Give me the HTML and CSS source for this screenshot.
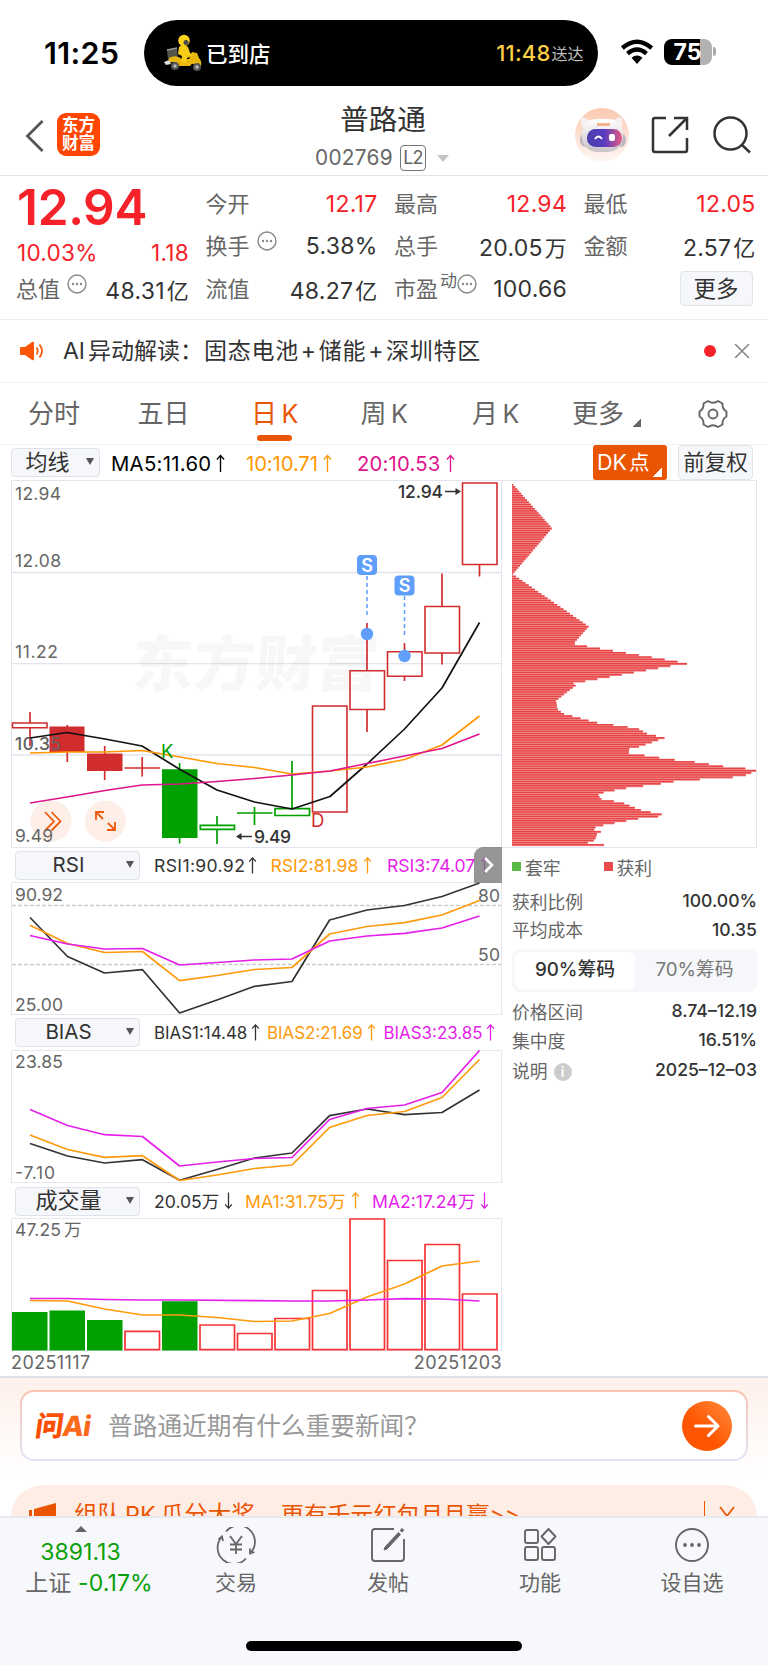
FILE: index.html
```html
<!DOCTYPE html>
<html lang="zh-CN">
<head>
<meta charset="utf-8">
<title>普路通 002769</title>
<link rel="stylesheet" href="styles.css">
</head>
<body>
<div class="phone">

<header class="status">
  <span class="clock">11:25</span>
  <div class="island">
    <svg class="scooter" width="40" height="38" viewBox="0 0 40 38">
      <path d="M3 16 L13 14 L14 26 L4 26Z" fill="#55554c"/><path d="M3 16L13 14" stroke="#999" stroke-width="1.5"/>
      <path d="M5 24 Q12 20 18 25 L25 25 L28 18 L33 19 L35 24 Q38 27 37 32 L33 33 Q29 27 26 32 L14 32 Q11 26 5 29Z" fill="#e9b60c"/>
      <path d="M15 13 Q19 9 24 13 L26 19 L30 21 L23 24 L22 29 L17 28 L18 22 L14 20Z" fill="#f7cc16"/>
      <circle cx="20" cy="6.500" r="5.800" fill="#ffd21c"/><circle cx="22" cy="8.500" r="2.500" fill="#484a50"/>
      <circle cx="11" cy="32" r="4" fill="#555"/><circle cx="11" cy="32" r="1.800" fill="#bbb"/>
      <circle cx="33" cy="33" r="4" fill="#555"/><circle cx="33" cy="33" r="1.800" fill="#bbb"/>
      <path d="M0 28L5 26L7 30L2 31Z" fill="#ddd"/>
    </svg>
    <span class="arrived">已到店</span>
    <span class="eta">11:48</span><span class="eta-label">送达</span>
  </div>
  <svg class="wifi" width="34" height="26" viewBox="0 0 34 26">
    <g fill="none" stroke="#000" stroke-width="4.300"><path d="M2.300 9 Q17 -3.500 31.700 9"/><path d="M7.500 14.600 Q17 6.500 26.500 14.600"/></g>
    <path d="M11.500 18.700 Q17 14.500 22.500 18.700 L17 25Z"/>
  </svg>
  <div class="battery"><span>75</span></div>
  <i class="battery-cap"></i>
</header>

<nav class="head">
  <svg class="back" width="20" height="34" viewBox="0 0 20 34"><path d="M17.500 2 L2.500 17 L17.500 32" fill="none" stroke="#555" stroke-width="2.800"/></svg>
  <div class="logo"><span>东方</span><span>财富</span></div>
  <div class="name">
    <h1>普路通</h1>
    <div class="code"><span>002769</span><b>L2</b><i></i></div>
  </div>
  <svg class="robot" width="54" height="54" viewBox="0 0 54 54">
    <defs>
      <linearGradient id="halo" x2="0" y2="1"><stop stop-color="#fbc9b1"/><stop offset="1" stop-color="#fff7f3"/></linearGradient>
      <linearGradient id="visor" x2="1"><stop stop-color="#493fae"/><stop offset=".5" stop-color="#5a3cc0"/><stop offset="1" stop-color="#e65b82"/></linearGradient>
      <linearGradient id="shell" x2="0" y2="1"><stop stop-color="#fff"/><stop offset="1" stop-color="#c9c3c8"/></linearGradient>
    </defs>
    <circle cx="27" cy="27" r="27" fill="url(#halo)"/>
    <path d="M8 20Q4 14 7 9Q12 10 17 15L37 14Q42 9 46 9Q49 14 46 21Z" fill="#f5f0f0"/>
    <rect x="5" y="25" width="46" height="14" rx="6" fill="#bcb8c2"/>
    <rect x="7" y="11" width="41" height="33" rx="15" fill="url(#shell)"/>
    <rect x="12" y="21" width="35" height="18" rx="8.500" fill="url(#visor)"/>
    <path d="M22 16.500H35" stroke="#f2a878" stroke-width="2.500"/>
    <path d="M20 31Q23.500 26 27 31" fill="none" stroke="#fff" stroke-width="2"/><rect x="34" y="26" width="6" height="7" rx="2" fill="#fff"/>
  </svg>
  <svg class="share" width="38" height="38" viewBox="0 0 38 38" fill="none" stroke="#333" stroke-width="2.500"><path d="M15 2H4Q2 2 2 4V34Q2 36 4 36H34Q36 36 36 34V22M23 2H36V14M36 2L18 20"/></svg>
  <svg class="search" width="38" height="38" viewBox="0 0 38 38" fill="none" stroke="#333" stroke-width="2.500"><circle cx="17.500" cy="17.500" r="16"/><path d="M28.500 28.500L37 36.500"/></svg>
</nav>

<section class="quote">
  <div class="price">12.94</div>
  <div class="cell change up"><span>10.03%</span><span>1.18</span></div>
  <div class="cell c1 r3"><label>总值<svg class="dots"><use href="#more-dot"/></svg></label><span>48.31<em>亿</em></span></div>
  <div class="cell c2 r1"><label>今开</label><span class="up">12.17</span></div>
  <div class="cell c3 r1"><label>最高</label><span class="up">12.94</span></div>
  <div class="cell c4 r1"><label>最低</label><span class="up">12.05</span></div>
  <div class="cell c2 r2"><label>换手<svg class="dots"><use href="#more-dot"/></svg></label><span>5.38%</span></div>
  <div class="cell c3 r2"><label>总手</label><span>20.05<em>万</em></span></div>
  <div class="cell c4 r2"><label>金额</label><span>2.57<em>亿</em></span></div>
  <div class="cell c2 r3"><label>流值</label><span>48.27<em>亿</em></span></div>
  <div class="cell c3 r3"><label>市盈<sup>动</sup><svg class="dots snug"><use href="#more-dot"/></svg></label><span>100.66</span></div>
  <button class="more">更多</button>
  <svg class="defs"><symbol id="more-dot" viewBox="0 0 20 20"><circle cx="10" cy="10" r="9" fill="none" stroke="#888" stroke-width="1.400"/><g fill="#888"><circle cx="6" cy="10" r="1.200"/><circle cx="10" cy="10" r="1.200"/><circle cx="14" cy="10" r="1.200"/></g></symbol></svg>
</section>

<section class="notice">
  <svg width="24" height="20" viewBox="0 0 24 20"><path d="M1 6H5L12 1Q14 0 14 2V18Q14 20 12 19L5 14H1Q0 14 0 13V7Q0 6 1 6Z" fill="#fb5607"/><path d="M16.500 6.500Q19 10 16.500 13.500M19.500 3.500Q24.500 10 19.500 16.500" fill="none" stroke="#fb5607" stroke-width="1.700"/></svg>
  <p><span class="ai">AI</span>异动解读：<span class="topic">固态电池<i>+</i>储能<i>+</i>深圳特区</span></p>
  <b></b>
  <svg width="16" height="14" viewBox="0 0 16 14"><path d="M1 0L15 14M15 0L1 14" stroke="#888" stroke-width="1.600"/></svg>
</section>

<nav class="tabs">
  <span>分时</span><span>五日</span><span class="on">日<i>K</i></span><span>周<i>K</i></span><span>月<i>K</i></span><span class="menu">更多<u></u></span>
  <svg width="30" height="30" viewBox="0 0 30 30" fill="none" stroke="#666" stroke-width="1.900"><path d="M10 2Q15 5.500 20 2L24.500 4.500Q24 10 28.500 12.500V17.500Q24 20 24.500 25.500L20 28Q15 24.500 10 28L5.500 25.500Q6 20 1.500 17.500V12.500Q6 10 5.500 4.500Z" stroke-linejoin="round"/><circle cx="15" cy="15" r="4.500"/></svg>
</nav>

<div class="ma-row">
  <div class="pick short">均线<i></i></div>
  <span class="ma m1">MA5:11.60<svg class="arr"><use href="#up"/></svg></span>
  <span class="ma m2">10:10.71<svg class="arr"><use href="#up"/></svg></span>
  <span class="ma m3">20:10.53<svg class="arr"><use href="#up"/></svg></span>
  <div class="dk">DK<em>点</em><i></i></div>
  <div class="adj">前复权</div>
  <svg class="defs"><symbol id="up" viewBox="0 0 10 20"><path d="M5 19.500V1M1 5.500L5 1L9 5.500" fill="none" stroke="currentColor" stroke-width="1.500"/></symbol><symbol id="down" viewBox="0 0 10 20"><path d="M5 .5V19M1 14.500L5 19L9 14.500" fill="none" stroke="currentColor" stroke-width="1.500"/></symbol></svg>
</div>

<main class="board">
  <div class="left">
    <svg class="kline" width="491" height="369" viewBox="11 480 491 369">
      <g fill="none" stroke="#e3e4ee"><path d="M11.500 480.500H501.500V847.500H11.500Z"/><path d="M11 572.500H501M11 663.700H501M11 755H501" stroke-width="1.300"/></g>
      <text class="mark" transform="translate(131 686) skewX(-4)" textLength="246" lengthAdjust="spacing">东方财富</text>
      <g fill="#fdefe8"><circle cx="51" cy="821" r="20.500"/><circle cx="105.300" cy="821" r="20.500"/></g>
      <g fill="none" stroke="#f05a0c" stroke-width="1.800"><path d="M45 812L54 821.500L45 830.500M51.500 812L60.500 821.500L51.500 830.500"/><path d="M96 820V812H104M96 812L103 819M115 822V830H107M115 830L108 823"/></g>
      <g class="lbl"><text x="15" y="500" textLength="46">12.94</text><text x="15" y="566.500" textLength="46">12.08</text><text x="15" y="658" textLength="43">11.22</text><text x="15" y="750" textLength="46">10.35</text><text x="15" y="841.500" textLength="38">9.49</text></g>
      <g stroke="#d12d2f" stroke-width="1.700" fill="none">
        <path d="M30 712V723M30 728V746M67.300 725V762M104.700 746V780M142.200 757V776.500M124.500 768H160M367 623V670M367 710V732M404.500 643V651M404.500 676V681M442 573.500V606M442 653V664.500M479.500 565V576.500"/>
        <path d="M49.500 726.500H84.500V752H49.500ZM87 753.500H122.500V771H87Z" fill="#d12d2f" stroke="none"/>
        <path stroke-width="1.600" d="M12.500 723H47V727.700H12.500ZM312.500 706H347V812H312.500ZM350 670.700H384.500V709.500H350ZM387.500 651.700H422V676.300H387.500ZM425 606.500H459.500V653H425ZM462.500 483H497V564.500H462.500Z"/>
      </g>
      <g stroke="#00a000" stroke-width="1.700" fill="none">
        <path d="M179.600 763V843.500M217 816V825M217 829V844M254.500 807V825M237 813H272.500M292 761V809"/>
        <path d="M162 769.200H197.500V838H162Z" fill="#00a000" stroke="none"/>
        <path d="M200.300 825.300H234.500V829.300H200.300ZM275 808.700H309.500V815.500H275Z"/>
      </g>
      <text class="lbl" x="15" y="750" textLength="46">10.35</text>
      <g fill="none" stroke-width="1.700" stroke-linejoin="round">
        <path stroke="#111" d="M30 738L67 732.500L105 739L142 746L180 769.500L217 790L254.500 802L292 809L330 796.500L367 764L404.500 729L442 688L479.500 622.500"/>
        <path stroke="#ff9800" d="M30 753L67 752L105 752L142 750.500L180 757L217 763.500L254.500 767.500L292 774L330 771L367 767L404.500 759.500L442 745L479.500 716"/>
        <path stroke="#e0148c" d="M30 803L67 797L105 790.500L142 785L180 784L217 781.500L254.500 778.500L292 775L330 771L367 763.500L404.500 756L442 748.500L479.500 734"/>
      </g>
      <text class="kd" x="161" y="758" fill="#00a000">K</text><text class="kd" x="311" y="827" fill="#d12d2f">D</text>
      <g class="peak"><text x="398" y="498" textLength="45">12.94</text><text x="254" y="843" textLength="37">9.49</text></g>
      <g stroke="#333" stroke-width="1.500" fill="#333"><path d="M445 491.500H457"/><path d="M455.500 488L461 491.500L455.500 495Z" stroke="none"/><path d="M252 836.500H240"/><path d="M241.500 833L236 836.500L241.500 840Z" stroke="none"/></g>
      <g stroke="#5b9dfd" stroke-width="1.500" stroke-dasharray="4 3"><path d="M367 576V615M404.500 596V635"/></g>
      <g fill="#5f9ffb"><circle cx="367" cy="634" r="6.200"/><circle cx="404.500" cy="656" r="6.200"/><rect x="357" y="555" width="20" height="20" rx="4"/><rect x="394.500" y="575.500" width="20" height="20" rx="4"/></g>
      <g class="s"><text x="367" y="571.500">S</text><text x="404.500" y="592">S</text></g>
    </svg>

    <div class="ind-row rsi"><div class="pick">RSI<i></i></div>
      <span class="k">RSI1:90.92<svg class="arr"><use href="#up"/></svg></span><span class="o">RSI2:81.98<svg class="arr"><use href="#up"/></svg></span><span class="p">RSI3:74.07<svg class="arr"><use href="#up"/></svg></span>
      <div class="next"><svg width="12" height="18" viewBox="0 0 12 18"><path d="M2 2L9 9L2 16" fill="none" stroke="#fff" stroke-width="2.600"/></svg></div>
    </div>
    <svg class="ind" width="491" height="134" viewBox="11 882 491 134" fill="none">
      <path d="M11.500 882.500H501.500V1014.500H11.500Z" stroke="#e6e7ee"/>
      <path d="M12 905.500H501M12 964.500H501" stroke="#ccc" stroke-width="1.500" stroke-dasharray="4 2"/>
      <g class="lbl"><text x="15" y="901" textLength="48">90.92</text><text x="15" y="1011" textLength="48">25.00</text><text x="478" y="902" textLength="22">80</text><text x="478" y="961" textLength="22">50</text></g>
      <g stroke-width="1.700" stroke-linejoin="round"><path stroke="#333" d="M30 917.500L67.500 956.500L104.500 973L142.500 969.700L179.600 1013L217 1000L254.500 986.300L292 981.500L329.600 920L367 910L404.500 905.500L442 896.500L479.500 883"/>
      <path stroke="#ff9a0c" d="M30 925.300L67.500 943.500L104.500 952.500L142.500 951.500L179.600 980.700L217 975.500L254.500 969.500L292 967.500L329.600 934L367 926.500L404.500 922.700L442 915L479.500 900.500"/>
      <path stroke="#e51eea" d="M30 935.500L67.500 944L104.500 949L142.500 948.500L179.600 965L217 962.500L254.500 960L292 959L329.600 941L367 936L404.500 933.300L442 928L479.500 916"/></g>
    </svg>

    <div class="ind-row bias"><div class="pick">BIAS<i></i></div>
      <span class="k">BIAS1:14.48<svg class="arr"><use href="#up"/></svg></span><span class="o">BIAS2:21.69<svg class="arr"><use href="#up"/></svg></span><span class="p">BIAS3:23.85<svg class="arr"><use href="#up"/></svg></span>
    </div>
    <svg class="ind" width="491" height="134" viewBox="11 1050 491 134" fill="none">
      <path d="M11.500 1050.500H501.500V1182.500H11.500Z" stroke="#e6e7ee"/>
      <g class="lbl"><text x="15" y="1068" textLength="48">23.85</text><text x="15" y="1178.500" textLength="40">-7.10</text></g>
      <g stroke-width="1.700" stroke-linejoin="round"><path stroke="#333" d="M30 1143.500L67.500 1156L104.500 1163L142.500 1159.700L179.600 1180.300L217 1169.500L254.500 1158L292 1153L329.600 1115.700L367 1109L404.500 1114.700L442 1112.500L479.500 1090"/>
      <path stroke="#ff9a0c" d="M30 1135L67.500 1149.500L104.500 1157.300L142.500 1155.700L179.600 1180.500L217 1175L254.500 1168.500L292 1165L329.600 1127.500L367 1115.500L404.500 1111.500L442 1097.500L479.500 1059.500"/>
      <path stroke="#e51eea" d="M30 1109.500L67.500 1125.500L104.500 1134.700L142.500 1136.500L179.600 1166L217 1162L254.500 1158.500L292 1157.500L329.600 1119.500L367 1108.500L404.500 1105L442 1092.500L479.500 1050.500"/></g>
    </svg>

    <div class="ind-row vol"><div class="pick">成交量<i></i></div>
      <span class="k">20.05万<svg class="arr"><use href="#down"/></svg></span><span class="o">MA1:31.75万<svg class="arr"><use href="#up"/></svg></span><span class="p">MA2:17.24万<svg class="arr"><use href="#down"/></svg></span>
    </div>
    <svg class="ind" width="491" height="134" viewBox="11 1218 491 134" fill="none">
      <path d="M11.500 1218.500H501.500V1350.500H11.500Z" stroke="#e6e7ee"/>
      <g class="lbl"><text x="15" y="1236" textLength="46">47.25</text><text x="64" y="1236">万</text></g>
      <path fill="#00a000" d="M12 1312H47.500V1350.500H12ZM49.500 1310.500H85V1350.500H49.500ZM87 1320H122.500V1350.500H87ZM162 1301.300H197.500V1350.500H162Z"/>
      <path stroke="#f63436" stroke-width="1.700" d="M125 1331.300H159.500V1349.700H125ZM200 1325H234.500V1349.700H200ZM237.500 1333.500H272V1349.700H237.500ZM275 1318.500H309.500V1349.700H275ZM312.500 1290.500H347V1349.700H312.500ZM350 1219H384.500V1349.700H350ZM387.500 1260.500H422V1349.700H387.500ZM425 1244.500H459.500V1349.700H425ZM462.500 1294H497V1349.700H462.500Z"/>
      <g stroke-width="1.700" stroke-linejoin="round"><path stroke="#ff9a0c" d="M30 1300.500L67.500 1301L104.500 1309L142.500 1315L179.600 1315L217 1317.500L254.500 1321.500L292 1321L329.600 1313.500L367 1297L404.500 1284L442 1266L479.500 1261"/>
      <path stroke="#e51eea" d="M30 1298.500L67.500 1298.500L104.500 1299.500L142.500 1300L179.600 1300L254.500 1300.700L292 1301L329.600 1301L367 1300L404.500 1298.700L442 1299L479.500 1301"/></g>
    </svg>
    <div class="dates"><span>20251117</span><span>20251203</span></div>
  </div>

  <aside class="chips">
    <svg width="256" height="369" viewBox="502 480 256 369"><path d="M502 480.500H756.500V847.500H502" fill="none" stroke="#e3e4ee"/><g id="bars"></g></svg>
    <div class="legend"><i class="g"></i><span>套牢</span><i class="r"></i><span>获利</span></div>
    <div class="kv a"><span>获利比例</span><b>100.00%</b></div>
    <div class="kv b"><span>平均成本</span><b>10.35</b></div>
    <div class="seg"><span class="sel">90%筹码</span><span>70%筹码</span></div>
    <div class="kv a"><span>价格区间</span><b>8.74–12.19</b></div>
    <div class="kv c"><span>集中度</span><b>16.51%</b></div>
    <div class="kv d"><span>说明<i class="info">i</i></span><b>2025–12–03</b></div>
  </aside>
</main>

<section class="promo">
  <div class="ask"><span class="ask-logo">问<i>Ai</i></span><span class="hint">普路通近期有什么重要新闻？</span>
    <div class="go"><svg width="26" height="24" viewBox="0 0 26 24"><path d="M1.500 12H24M14.500 2.500L24 12L14.500 21.500" fill="none" stroke="#fff" stroke-width="3" stroke-linecap="round" stroke-linejoin="round"/></svg></div>
  </div>
  <div class="banner">
    <svg class="horn" width="30" height="28" viewBox="0 0 30 28" fill="#ea5504"><path d="M0 7H3V24H0ZM5 6L27 0V28L5 22Z"/></svg>
    <span class="b1">组队</span><span class="b2">PK</span><span class="b3">瓜分大奖</span><span class="b4">更有千元红包月月赢&gt;&gt;</span>
    <i></i><svg class="x" width="16" height="20" viewBox="0 0 16 20"><path d="M1 1L15 19M15 1L1 19" stroke="#ea5504" stroke-width="1.700"/></svg>
  </div>
</section>

<footer class="dock">
  <div class="index"><i></i><span class="pt">3891.13</span><span class="chg"><em>上证</em> -0.17%</span></div>
  <div class="item"><svg width="40" height="36" viewBox="0 0 40 36" fill="none" stroke="#666" stroke-width="1.800"><path d="M10 4.500A16 16 0 0 1 35.300 25M2.500 12.500L6 9.500L7 14M5.700 10A16 16 0 0 0 30 31.500M34 21.500V26.500L38.500 25"/><path d="M14 9L20 17L26 9M20 17V27M14 17.500H26M14 22.500H26"/></svg><span>交易</span></div>
  <div class="item"><svg width="36" height="36" viewBox="0 0 36 36" fill="none" stroke="#666" stroke-width="1.900"><path d="M24 2H5Q2 2 2 5V31Q2 34 5 34H31Q34 34 34 31V12"/><path d="M14 23L15 20L28.500 5.500L30.500 7.500L17 22Z" fill="#666" stroke-width="1"/><path d="M31 4.500L33 2" stroke-width="3.400"/></svg><span>发帖</span></div>
  <div class="item"><svg width="34" height="36" viewBox="0 0 34 36" fill="none" stroke="#666" stroke-width="1.900"><rect x="2" y="3" width="13" height="13" rx="2"/><rect x="2" y="20" width="13" height="13" rx="2"/><rect x="19" y="20" width="13" height="13" rx="2"/><path d="M25.500 2L32.500 9.500L25.500 17L18.500 9.500Z" stroke-linejoin="round"/></svg><span>功能</span></div>
  <div class="item"><svg width="36" height="36" viewBox="0 0 36 36"><circle cx="18" cy="18" r="16" fill="none" stroke="#666" stroke-width="1.900"/><g fill="#666"><circle cx="11" cy="18" r="1.900"/><circle cx="18" cy="18" r="1.900"/><circle cx="25" cy="18" r="1.900"/></g></svg><span>设自选</span></div>
</footer>
<div class="home"><i></i></div>
</div>
<script src="chips.js"></script>
</body>
</html>
```
FILE: styles.css
```css
* { box-sizing: border-box; }
body { margin: 0; background: #fff; color: #333; font-family: Inter, "Noto Sans CJK SC", sans-serif; }
i, em { font-style: normal; }
svg { display: block; flex: none; }
span, b, label { white-space: nowrap; }
.defs { position: absolute; width: 0; height: 0; }
.phone { width: 768px; height: 1665px; overflow: hidden; display: flex; flex-direction: column; }

.status { height: 86px; flex: none; display: flex; padding: 20px 0 0 44px; align-items: center; color: #000; }
.clock { width: 99.500px; font-size: 30.500px; font-weight: 600; line-height: 66px; letter-spacing: .3px; }
.island { width: 454px; height: 66px; border-radius: 33px; background: #000; color: #fff; display: flex; align-items: center; padding: 0 14px 0 20px; }
.arrived { font-size: 21.500px; font-weight: 500; margin: -2px 0 0 2.500px; }
.eta { margin-left: auto; color: #fccf45; font-size: 22px; font-weight: 500; letter-spacing: .2px; }
.eta-label { font-size: 16px; color: #bbb; margin-left: 1px; }
.wifi { margin: 0 0 3px 22.500px; }
.battery { width: 48px; height: 26px; border-radius: 8px; margin: -3px 0 0 9.500px; background: linear-gradient(90deg, #000 0 75%, #b2b2b2 75%); color: #fff; text-align: center; font-size: 23px; line-height: 26px; font-weight: 700; }
.battery-cap { width: 3px; height: 9px; margin: -3px 0 0 1.500px; background: #aaa; border-radius: 0 4px 4px 0; }

.head { height: 90px; flex: none; display: flex; border-bottom: 1.500px solid #e4e4e4; padding-left: 25px; }
.back { margin-top: 33px; }
.logo { width: 43px; height: 43px; margin: 27px 0 0 12px; border-radius: 9px; background: #ff4600; color: #fff; font-size: 16.500px; font-weight: 700; line-height: 18px; padding-top: 3px; display: flex; flex-direction: column; align-items: center; }
.name { width: 180px; margin-left: 195px; }
.name h1 { margin: 16px 0 0 45px; font-size: 28.700px; line-height: 36px; font-weight: 400; color: #333; white-space: nowrap; }
.code { display: flex; align-items: center; margin: 7px 0 0 20px; font-size: 20.800px; line-height: 26px; color: #666; letter-spacing: .3px; }
.code b { font-weight: 400; font-size: 18px; width: 26px; height: 26px; border: 1.300px solid #777; border-radius: 4px; margin-left: 7px; line-height: 24px; text-align: center; letter-spacing: -.8px; }
.code i { margin-left: 11px; border: 6.500px solid transparent; border-top: 7px solid #c4c4c4; border-bottom: 0; }
.robot { margin: 22px 0 0 100px; }
.share { margin: 30px 0 0 22px; }
.search { margin: 30px 0 0 24px; }

.quote { height: 144px; flex: none; border-bottom: 1px solid #eee; display: grid; grid-template-columns: 172px 171px 172px 171px; column-gap: 17.500px; grid-template-rows: 45px 43px 43px; padding: 3px 0 0 17px; }
.price { grid-area: 1 / 1; color: #f5222a; font-size: 49.500px; line-height: 56px; font-weight: 600; letter-spacing: -.3px; }
.cell { display: flex; justify-content: space-between; align-items: center; font-size: 23px; height: 50px; letter-spacing: .25px; }
.cell em { margin-left: 2px; font-size: 22px; }
.cell label { color: #666; display: flex; align-items: center; letter-spacing: 0; font-size: 22px; margin: -4px 0 0 -1px; }
.cell.up, .up { color: #f5222a; }
.change { grid-area: 2 / 1; padding-top: 7px; font-size: 22.600px; }
.c1 { grid-column: 1; } .c2 { grid-column: 2; } .c3 { grid-column: 3; } .c4 { grid-column: 4; }
.r1 { grid-row: 1; } .r2 { grid-row: 2; height: 43px; } .r3 { grid-row: 3; height: 43px; }
.dots { width: 20px; height: 20px; margin: -6px 0 0 7px; }
.dots.snug { margin-left: 0; }
.cell sup { font-size: 17px; line-height: 20px; margin: -12px 0 0 2px; }
.more { grid-area: 3 / 4; width: 73px; height: 35px; margin: 4px 3px 0 auto; border: 1.500px solid #e1e4ea; border-radius: 4px; background: #f6f7fa; font: 22.500px/30px Inter, "Noto Sans CJK SC", sans-serif; color: #333; padding: 0; }

.notice { height: 63px; flex: none; border-bottom: 1.500px solid #f2f2f2; display: flex; align-items: center; padding: 0 18px 0 20px; }
.notice p { margin: 0 auto 0 19px; font-size: 23px; line-height: 34px; display: flex; white-space: nowrap; letter-spacing: 0; }
.ai { margin-right: 3px; }
.topic { display: block; margin-left: 1px; letter-spacing: .7px; }
.topic i { margin: 0 2px; }
.notice b { width: 12px; height: 12px; border-radius: 50%; background: #f5222a; margin-right: 18px; }

.tabs { height: 62px; flex: none; border-bottom: 1.500px solid #f2f2f2; display: grid; grid-template-columns: 109.500px 109.500px 109.500px 110.500px 105px 126px 30px; padding: 0 0 0 28px; line-height: 60px; font-size: 26px; color: #666; align-items: center; }
.tabs i { margin-left: 4.500px; font-size: 25px; }
.tabs span { height: 60px; }
.tabs .on { color: #ea5504; position: relative; padding-left: 4px; }
.tabs span:nth-child(4) { padding-left: 4px; } .tabs span:nth-child(5) { padding-left: 5px; }
.tabs .on::after { content: ""; position: absolute; left: 9.500px; bottom: 3px; width: 35px; height: 6px; border-radius: 3px; background: #ea5504; }
.menu { display: flex; align-items: center; }
.menu u { width: 8px; height: 8px; background: linear-gradient(135deg, transparent 50%, #666 50%); margin: 19px 0 0 9px; }

.ma-row { height: 35px; flex: none; display: flex; padding: 0 15px 0 11px; font-size: 20.300px; line-height: 37px; position: relative; }
.pick { width: 125px; height: 29px; border: 1.300px solid #dfe2ea; border-radius: 4px; background: #f6f7fa; line-height: 26px; font-size: 20.500px; position: relative; text-align: center; padding-right: 18px; flex: none; }
.pick i { position: absolute; right: 5px; top: 9px; border: 4.500px solid transparent; border-top: 7px solid #555; border-bottom: 0; }
.pick.short { width: 89px; margin: 3px 11px 0 0; font-size: 22px; padding-right: 16px; }
.arr { width: 9px; height: 19px; margin-left: 5px; }
.ma { display: flex; align-items: center; height: 37px; }
.m1 { color: #000; width: 135px; letter-spacing: .3px; } .m2 { color: #ff9800; width: 111px; letter-spacing: -.1px; } .m3 { color: #e0148c; letter-spacing: .2px; }
.dk { width: 74px; height: 35px; margin: 0 11px 0 auto; border-radius: 3px; background: #ea5504; color: #fff; font-size: 21.500px; line-height: 34px; padding-left: 4px; position: relative; }
.dk em { margin-left: 2px; font-size: 20.500px; }
.dk i { position: absolute; right: 5px; bottom: 3px; width: 10px; height: 10px; background: linear-gradient(135deg, transparent 50%, #fff 50%); }
.adj { width: 75px; height: 35px; border: 1.300px solid #e1e4ea; border-radius: 4px; background: #f6f7fa; font-size: 21.500px; line-height: 32px; text-align: center; white-space: nowrap; }

.board { display: flex; height: 896px; flex: none; padding-left: 11px; }
.left { width: 491px; display: flex; flex-direction: column; }
.lbl { font-size: 17.500px; fill: #666; }
.mark { font-size: 61px; font-weight: 900; fill: #000; fill-opacity: .03; }
.kd { font-size: 18.500px; }
.peak { font-size: 17.500px; font-weight: 500; fill: #333; }
.s { fill: #fff; font-size: 18px; font-weight: 600; text-anchor: middle; }
.ind-row { height: 33px; display: flex; padding: 2px 0 0 4px; position: relative; font-size: 17.600px; }
.ind-row > span { display: flex; align-items: center; height: 29px; }
.ind-row .arr { height: 17px; }
.k { width: 116.500px; margin-left: 14px; color: #333; } .o { width: 116.500px; color: #ff9a0c; } .p { color: #e51eea; }
.rsi .k { letter-spacing: .35px; } .rsi .k .arr { margin-left: 3px; }
.next { position: absolute; right: 0; top: -2px; width: 28px; height: 36px; background: rgba(115,115,115,.75); border-radius: 9px 0 0 0; display: flex; align-items: center; padding-left: 9px; }
.bias { height: 34px; font-size: 16.900px; } .bias .k { width: 113px; } .bias .arr { margin-left: 4px; }
.vol { height: 34px; font-size: 17.600px; } .vol .k { width: 91px; } .vol .o { width: 127px; }
.vol .pick { font-size: 22px; margin-top: 1px; line-height: 25px; }
.dates { display: flex; justify-content: space-between; font-size: 18px; line-height: 22px; color: #666; letter-spacing: .4px; }

.chips { width: 255px; }
.legend { display: flex; align-items: center; height: 35px; padding-left: 10px; font-size: 17.800px; color: #666; }
.legend i { width: 9px; height: 9px; margin-right: 4px; }
.legend .g { background: #5bb947; } .legend .r { background: #ea4b4d; margin-left: 43px; }
.kv { display: flex; justify-content: space-between; align-items: center; margin-left: 10px; font-size: 17.800px; height: 29px; color: #666; }
.kv b { font-weight: 500; color: #333; font-size: 17.600px; }
.kv.a { margin-top: 2px; } .kv.b { height: 28px; }
.seg { display: flex; margin: 6px 0 4px 10px; height: 43px; background: #f6f7fa; border-radius: 8px; padding: 3px; font-size: 18.800px; line-height: 36px; text-align: center; color: #777; }
.seg span { flex: 1; }
.seg .sel { background: #fff; border-radius: 6px; color: #333; font-weight: 500; flex: none; width: 120px; }
.kv.d { height: 31px; }
.info { display: inline-block; width: 18px; height: 18px; border-radius: 50%; background: #ccc; color: #fff; font-size: 14px; font-weight: 600; line-height: 18px; text-align: center; margin-left: 6px; vertical-align: 1px; }

.promo { height: 140px; flex: none; overflow: hidden; border-top: 2px solid #dfe0e5; background: linear-gradient(#fef0ea, #fff 70%); padding: 12px 11px 0; }
.ask { margin: 0 9px; height: 71px; border: 2px solid transparent; border-radius: 14px; background: linear-gradient(#fff, #fff) padding-box, linear-gradient(#fbc2b3, #dfe6f6) border-box; display: flex; align-items: center; padding: 0 14px; }
.ask-logo { font-size: 28px; font-weight: 900; color: #fb4f05; transform: skewX(-8deg); letter-spacing: -1px; width: 72px; margin-top: -4px; }
.ask-logo i { color: #fb6a1b; font-weight: 800; }
.hint { font-size: 24.700px; color: #999; margin-top: -3px; }
.go { width: 50px; height: 50px; border-radius: 50%; margin-left: auto; background: linear-gradient(45deg, #ff5500 40%, #ff8b3d); display: flex; align-items: center; justify-content: center; }
.banner { margin-top: 24px; height: 64px; border-radius: 32px; background: #feede5; display: flex; color: #ea5504; font-size: 23.500px; line-height: 34px; padding: 13px 22px 0 18px; }
.horn { margin-top: 5px; }
.b1 { margin-left: 15px; } .b2 { margin-left: 4px; } .b3 { margin-left: 5px; } .b4 { margin-left: 26px; font-size: 23.200px; }
.banner i { width: 1.500px; height: 40px; background: #ea5504; margin: 3px 14px 0 auto; }
.x { margin-top: 8px; }

.dock { height: 100px; flex: none; background: #f7f8fb; border-top: 2px solid #e7e9ef; display: grid; grid-template-columns: 160px 152px 152px 152px 152px; font-size: 21px; color: #666; }
.index { display: flex; flex-direction: column; align-items: center; color: #0aa00a; padding: 8px 0 0 18px; line-height: 31px; font-size: 23px; }
.index i { border: 6.500px solid transparent; border-bottom: 6px solid #666; border-top: 0; margin-right: 17px; }
.index .pt { margin: 5px 17px 0 0; line-height: 31px; }
.index .chg { letter-spacing: .1px; }
.index em { color: #666; font-size: 23px; }
.item { display: flex; flex-direction: column; align-items: center; padding-top: 9px; line-height: 30px; }
.item span { margin-top: 5px; }
.home { flex: 1; background: #f7f8fb; display: flex; justify-content: center; padding-top: 25px; }
.home i { width: 276px; height: 10px; border-radius: 5px; background: #000; }
```
FILE: chips.js
```js
// Price profile: [offset from top, width], interpolated into evenly spaced bars.
const profile = [[0,4],[130,120],[268,2],[425,230],[477,184],[484,223],[536,531],[542,482],[589,220],[595,184],[602,191],[647,132],[673,136],[687,155],[693,178],[713,252],[719,297],[726,344],[733,381],[746,404],[759,458],[785,383],[792,352],[805,350],[811,393],[824,481],[831,546],[844,630],[851,701],[857,733],[863,720],[870,704],[876,679],[883,572],[889,491],[896,452],[909,347],[922,277],[929,259],[942,265],[948,300],[955,335],[968,367],[974,381],[981,411],[988,449],[994,447],[1001,381],[1014,310],[1021,274],[1027,251],[1034,246],[1040,268],[1047,255],[1060,251],[1067,245],[1073,224],[1080,276]];
const host = document.getElementById('bars');
const NS = 'http://www.w3.org/2000/svg';
const count = 165;
function widthAt(t) {
  let i = 1;
  while (i < profile.length - 1 && profile[i][0] < t) i++;
  const [a, b] = [profile[i - 1], profile[i]];
  return a[1] + (b[1] - a[1]) * (t - a[0]) / (b[0] - a[0]);
}
function bar(y, w, h, fill) {
  const r = document.createElementNS(NS, 'rect');
  r.setAttribute('x', 512);
  r.setAttribute('y', y);
  r.setAttribute('width', w);
  r.setAttribute('height', h);
  r.setAttribute('fill', fill);
  host.appendChild(r);
}
for (let n = 0; n <= count; n++) {
  const t = n * 1080 / count;
  const y = 484 + t / 3;
  const w = widthAt(t) / 3;
  bar(y, w, 2.19, '#f28c8e');
  bar(y, w, 1.45, '#e84547');
}
```
